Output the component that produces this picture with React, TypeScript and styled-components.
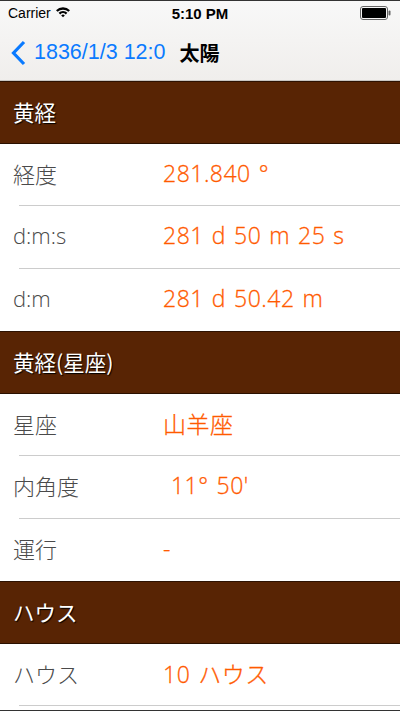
import styled, { createGlobalStyle } from "styled-components";

const GlobalStyle = createGlobalStyle`
  html, body {
    margin: 0;
    padding: 0;
    background: #ffffff;
  }
  body {
    font-family: "Liberation Sans", "Noto Sans CJK JP", sans-serif;
  }
`;

type Row = { label: string; value: string };
type Section = { title: string; rows: Row[] };

const sections: Section[] = [
  {
    title: "黄経",
    rows: [
      { label: "経度", value: "281.840 °" },
      { label: "d:m:s", value: "281 d 50 m 25 s" },
      { label: "d:m", value: "281 d 50.42 m" },
    ],
  },
  {
    title: "黄経(星座)",
    rows: [
      { label: "星座", value: "山羊座" },
      { label: "内角度", value: " 11° 50'" },
      { label: "運行", value: "-" },
    ],
  },
  {
    title: "ハウス",
    rows: [{ label: "ハウス", value: "10 ハウス" }],
  },
];

const WifiIcon = () => (
  <svg width="16" height="12" viewBox="0 0 16 12">
    <path d="M1 4.2 A10 10 0 0 1 15 4.2 L13.4 5.8 A7.8 7.8 0 0 0 2.6 5.8 Z" fill="#000" />
    <path d="M3.6 6.8 A6.4 6.4 0 0 1 12.4 6.8 L10.8 8.4 A4.1 4.1 0 0 0 5.2 8.4 Z" fill="#000" />
    <path d="M6.2 9.4 A2.6 2.6 0 0 1 9.8 9.4 L8 11.3 Z" fill="#000" />
  </svg>
);

const BatteryIcon = () => (
  <svg width="32" height="14" viewBox="0 0 32 14">
    <rect x="0.5" y="0.5" width="27" height="13" rx="2.5" fill="none" stroke="#666" />
    <rect x="2" y="2" width="24" height="10" rx="1" fill="#000" />
    <rect x="28.5" y="4.5" width="2" height="5" rx="1" fill="#666" />
  </svg>
);

const BackChevron = () => (
  <svg width="16" height="26" viewBox="0 0 16 26">
    <path d="M14 2 L3.5 13 L14 24" fill="none" stroke="#0a7aff" strokeWidth="3.2" />
  </svg>
);

export default function App() {
  return (
    <>
      <GlobalStyle />
      <Screen>
        <TopBar>
          <StatusBar>
            <Carrier>
              Carrier <WifiIcon />
            </Carrier>
            <Clock>5:10 PM</Clock>
            <Battery>
              <BatteryIcon />
            </Battery>
          </StatusBar>
          <NavBar>
            <BackButton>
              <BackChevron />
              <BackLabel>1836/1/3 12:0</BackLabel>
            </BackButton>
            <NavTitle>太陽</NavTitle>
          </NavBar>
        </TopBar>
        {sections.map((s) => (
          <div key={s.title}>
            <SectionHeader>{s.title}</SectionHeader>
            {s.rows.map((r, i) => (
              <Cell key={r.label} $last={i === s.rows.length - 1 && s.title !== "ハウス"}>
                <Label>{r.label}</Label>
                <Value>{r.value}</Value>
              </Cell>
            ))}
          </div>
        ))}
      </Screen>
    </>
  );
}

const Screen = styled.div`
  width: 400px;
  height: 711px;
  overflow: hidden;
  box-sizing: border-box;
  border-top: 1px solid #333;
  border-bottom: 1px solid #333;
  background: #fff;
`;

const TopBar = styled.div`
  height: 79px;
  background: linear-gradient(#f8f8f8, #f0eeec);
  border-bottom: 1px solid #c9c6c3;
`;

const StatusBar = styled.div`
  height: 24px;
  display: grid;
  grid-template-columns: 1fr auto 1fr;
  align-items: center;
  padding: 0 8px;
  font-size: 14px;
  color: #000;
`;

const Carrier = styled.div`
  display: flex;
  align-items: center;
  gap: 4px;
  & svg {
    margin-top: -2px;
  }
`;

const Clock = styled.div`
  font-weight: bold;
  font-size: 15px;
`;

const Battery = styled.div`
  display: flex;
  justify-content: flex-end;
`;

const NavBar = styled.div`
  height: 55px;
  display: flex;
  align-items: center;
  padding-left: 10px;
`;

const BackButton = styled.div`
  display: flex;
  align-items: center;
  gap: 8px;
  color: #0a7aff;
`;

const BackLabel = styled.span`
  font-size: 21.5px;
`;

const NavTitle = styled.span`
  margin-left: 14px;
  font-size: 20px;
  font-weight: bold;
  color: #000;
`;

const SectionHeader = styled.div`
  height: 62.5px;
  box-sizing: border-box;
  display: flex;
  align-items: center;
  padding: 0 0 2px 13px;
  background: #582404;
  border-top: 1px solid #2e1202;
  border-bottom: 1px solid #2a1000;
  color: #fff;
  font-family: "Noto Sans CJK JP", sans-serif;
  font-size: 21.5px;
  text-shadow: 1px 1px 1px #000;
`;

const Cell = styled.div<{ $last: boolean }>`
  height: 62.5px;
  box-sizing: border-box;
  display: flex;
  align-items: center;
  padding-bottom: 4px;
  position: relative;
  font-family: "Open Sans", "Noto Sans CJK JP", sans-serif;
  font-weight: 300;
  &::after {
    content: "";
    display: ${(p) => (p.$last ? "none" : "block")};
    position: absolute;
    left: 19px;
    right: 0;
    bottom: 0;
    height: 1px;
    background: #cccccc;
  }
`;

const Label = styled.div`
  width: 150px;
  padding-left: 13px;
  font-size: 22px;
  color: #4a4a4a;
`;

const Value = styled.div`
  font-size: 23px;
  letter-spacing: 0.5px;
  word-spacing: 1.5px;
  color: #ff5a00;
  white-space: pre;
  -webkit-text-stroke: 0.3px #ff5a00;
`;
